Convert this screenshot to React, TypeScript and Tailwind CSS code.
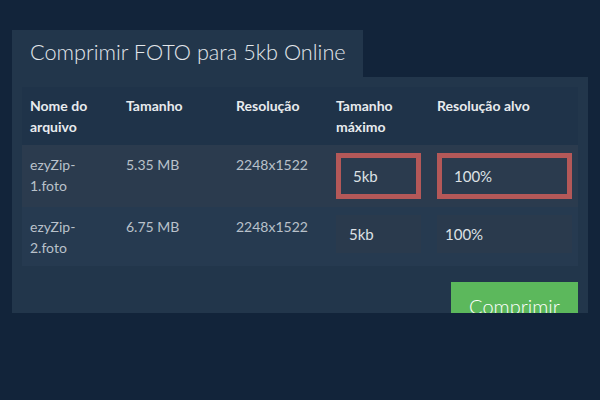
import React from "react";

const font = { fontFamily: "Lato, 'Open Sans', sans-serif" };

export default function App() {
  const rows = [
    { name: ["ezyZip-", "1.foto"], size: "5.35 MB", res: "2248x1522", hl: true },
    { name: ["ezyZip-", "2.foto"], size: "6.75 MB", res: "2248x1522", hl: false },
  ];
  return (
    <div className="w-[600px] h-[400px] bg-[#12243a] pt-[30px] pl-[12px] overflow-hidden" style={font}>
      <div className="w-[576px]">
        <div className="w-[351px] whitespace-nowrap bg-[#22364b] h-[47px] pl-[18px] pt-[8px] text-[21.7px] leading-[28px] text-[#e3e7eb] font-light">
          Comprimir FOTO para 5kb Online
        </div>
        <div className="bg-[#22364b] h-[236px] p-[10px] overflow-hidden">
          <div className="grid grid-cols-[96px_110px_100px_101px_149px] text-[14px] leading-[21px]">
            <div className="contents font-bold text-[#e8ebee]">
              <div className="bg-[#1f3349] p-2">Nome do<br />arquivo</div>
              <div className="bg-[#1f3349] p-2">Tamanho</div>
              <div className="bg-[#1f3349] p-2">Resolução</div>
              <div className="bg-[#1f3349] p-2">Tamanho<br />máximo</div>
              <div className="bg-[#1f3349] p-2">Resolução alvo</div>
            </div>
            {rows.map((r, i) => {
              const bg = i === 0 ? "bg-[#2b3b4e]" : "bg-[#263a50]";
              return (
                <div key={i} className="contents text-[#b9c1ca]">
                  <div className={`${bg} p-2 pt-[9px]`}>{r.name[0]}<br />{r.name[1]}</div>
                  <div className={`${bg} p-2 pt-[9px]`}>{r.size}</div>
                  <div className={`${bg} p-2 pt-[9px]`}>{r.res}</div>
                  <div className={`${bg} p-2`}>
                    {r.hl ? (
                      <div className="w-[85px] h-[46px] border-[5px] border-[#b45858] bg-[#2b3b4e] pl-[12px] flex items-center text-[15px] text-[#dde1e5]">5kb</div>
                    ) : (
                      <div className="w-[85px] h-[38px] bg-[#2a3a4d] pl-[13px] flex items-center text-[15px] text-[#dde1e5]">5kb</div>
                    )}
                  </div>
                  <div className={`${bg} pl-2 pr-[6px] py-2`}>
                    {r.hl ? (
                      <div className="w-[135px] h-[46px] border-[5px] border-[#b45858] bg-[#2b3b4e] pl-[12px] flex items-center text-[15px] text-[#dde1e5]">100%</div>
                    ) : (
                      <div className="w-[135px] h-[38px] bg-[#2a3a4d] pl-[8px] flex items-center text-[15px] text-[#dde1e5]">100%</div>
                    )}
                  </div>
                </div>
              );
            })}
          </div>
          <div className="flex justify-end mt-[16px]">
            <button className="w-[127px] bg-[#5cb85c] text-white text-[20px] font-light leading-[28px] text-center pt-[10px] pb-[10px]">
              Comprimir
            </button>
          </div>
        </div>
      </div>
    </div>
  );
}
